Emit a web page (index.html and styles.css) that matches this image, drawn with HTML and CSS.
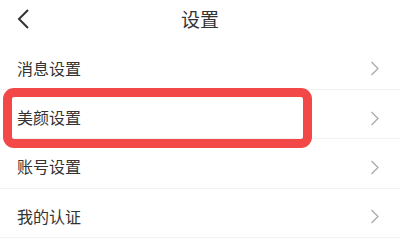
FILE: index.html
```html
<!DOCTYPE html>
<html lang="zh">
<head>
<meta charset="utf-8">
<link rel="stylesheet" href="styles.css">
</head>
<body>
<div class="page">
  <header class="header">
    <svg class="back" width="14" height="22" viewBox="0 0 14 22"><path d="M11 2 L2 11 L11 20" fill="none" stroke="#333" stroke-width="2"/></svg>
    <div class="title">设置</div>
  </header>
  <div class="list">
    <div class="row"><span class="label">消息设置</span><svg class="arrow" width="10" height="15" viewBox="0 0 10 15"><path d="M1.5 1 L8 7.5 L1.5 14" fill="none" stroke="#aaa" stroke-width="1.3"/></svg></div>
    <div class="row"><span class="label">美颜设置</span><svg class="arrow" width="10" height="15" viewBox="0 0 10 15"><path d="M1.5 1 L8 7.5 L1.5 14" fill="none" stroke="#aaa" stroke-width="1.3"/></svg></div>
    <div class="row"><span class="label">账号设置</span><svg class="arrow" width="10" height="15" viewBox="0 0 10 15"><path d="M1.5 1 L8 7.5 L1.5 14" fill="none" stroke="#aaa" stroke-width="1.3"/></svg></div>
    <div class="row"><span class="label">我的认证</span><svg class="arrow" width="10" height="15" viewBox="0 0 10 15"><path d="M1.5 1 L8 7.5 L1.5 14" fill="none" stroke="#aaa" stroke-width="1.3"/></svg></div>
  </div>
  <div class="highlight"></div>
</div>
</body>
</html>
```
FILE: styles.css
```css
* { box-sizing: border-box; }
html, body { margin: 0; padding: 0; background: #fff; }
body { font-family: "Noto Sans CJK SC", "Noto Sans", sans-serif; color: #333; }
.page { position: relative; width: 400px; height: 242px; overflow: hidden; }
.header { height: 40.7px; display: flex; align-items: center; justify-content: center; position: relative; }
.back { position: absolute; left: 17px; top: 8px; }
.title { font-size: 19px; line-height: 1; margin-top: -4px; color: #333; }
.list { display: flex; flex-direction: column; }
.row { height: 49.3px; display: flex; align-items: center; justify-content: space-between; padding: 6px 20px 0 17px; border-bottom: 1px solid #f2f2f2; }
.label { font-size: 16px; line-height: 1; color: #333; }
.arrow { display: block; margin-top: 2px; }
.highlight { position: absolute; left: 3px; top: 88px; width: 309px; height: 60px; border: 9px solid #f24848; border-radius: 11px; }
```
